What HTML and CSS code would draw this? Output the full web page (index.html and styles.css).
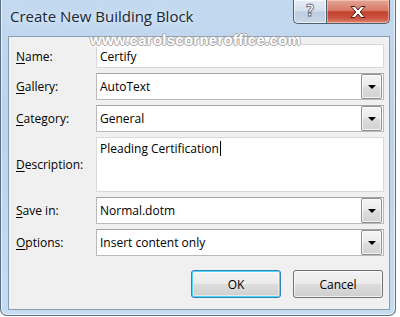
FILE: index.html
```html
<!DOCTYPE html>
<html>
<head>
<meta charset="utf-8">
<link rel="stylesheet" href="styles.css">
</head>
<body>
<div class="window">
  <div class="titlebar">
    <div class="title">Create New Building Block</div>
    <div class="caption-buttons">
      <div class="cap help"><span>?</span></div>
      <div class="cap close">
        <svg width="22" height="14" viewBox="0 0 22 14">
          <path d="M4 1.5 L8 1.5 L11 5 L14 1.5 L18 1.5 L13.2 7 L18 12.5 L14 12.5 L11 9 L8 12.5 L4 12.5 L8.8 7 Z" fill="#ffffff" stroke="#5a1d15" stroke-width="1" stroke-linejoin="round"/>
        </svg>
      </div>
    </div>
  </div>
  <div class="client">
    <div class="form">
      <label class="lbl"><u>N</u>ame:</label>
      <div class="field text h24"><span>Certify</span></div>

      <label class="lbl"><u>G</u>allery:</label>
      <div class="field combo"><span>AutoText</span><div class="drop"><i></i></div></div>

      <label class="lbl"><u>C</u>ategory:</label>
      <div class="field combo"><span>General</span><div class="drop"><i></i></div></div>

      <label class="lbl"><u>D</u>escription:</label>
      <div class="field area"><span>Pleading Certification</span><b class="caret"></b></div>

      <label class="lbl"><u>S</u>ave in:</label>
      <div class="field combo"><span>Normal.dotm</span><div class="drop"><i></i></div></div>

      <label class="lbl"><u>O</u>ptions:</label>
      <div class="field combo"><span>Insert content only</span><div class="drop"><i></i></div></div>
    </div>
    <div class="buttons">
      <div class="btn default">OK</div>
      <div class="btn">Cancel</div>
    </div>
  </div>
  <div class="watermark">www.carolscorneroffice.com</div>
</div>
</body>
</html>
```

FILE: styles.css
```css
html, body {
  margin: 0;
  padding: 0;
  background: #ffffff;
  width: 400px;
  height: 317px;
  overflow: hidden;
}

.window {
  position: relative;
  box-sizing: border-box;
  width: 396px;
  height: 316px;
  border: 1px solid #5d6f84;
  border-top: none;
  border-radius: 0 0 7px 7px;
  background: linear-gradient(to bottom, #c3d9f0 0%, #bcd3ec 40%, #c6dcf2 100%);
  box-shadow: inset 1px 0 0 rgba(255,255,255,0.6), inset -1px 0 0 rgba(255,255,255,0.6), inset 0 -1px 0 rgba(255,255,255,0.6);
  font-family: "Open Sans", "Liberation Sans", sans-serif;
  display: flex;
  flex-direction: column;
}

.titlebar {
  height: 36px;
  display: flex;
  justify-content: space-between;
  align-items: flex-start;
  padding: 0 5px 0 9px;
}

.title {
  font-size: 15px;
  color: #1a2738;
  padding-top: 6px;
  text-shadow: 0 0 6px rgba(255,255,255,0.9);
}

.caption-buttons {
  display: flex;
}

.cap {
  box-sizing: border-box;
  height: 24px;
  border: 1px solid #4f5f73;
  border-top: none;
  display: flex;
  align-items: center;
  justify-content: center;
}

.help {
  width: 33px;
  border-right: none;
  border-radius: 0 0 0 5px;
  background: linear-gradient(to bottom, #e6eef7 0%, #d3dfec 48%, #bccde0 52%, #c9d8e8 100%);
  box-shadow: inset 0 0 0 1px rgba(255,255,255,0.6);
}

.help span {
  font-family: "DejaVu Sans", sans-serif;
  font-weight: bold;
  font-size: 15px;
  color: #ffffff;
  -webkit-text-stroke: 0.8px #55657a;
  line-height: 1;
  margin-top: -1px;
}

.close {
  width: 64px;
  border-radius: 0 0 5px 0;
  background: linear-gradient(to bottom, #e4a596 0%, #d67a66 45%, #c3412d 52%, #cc5441 80%, #dd8a72 100%);
  box-shadow: inset 0 0 0 1px rgba(255,220,210,0.5);
}

.client {
  box-sizing: border-box;
  margin: 0 5px 5px 7px;
  flex: 1;
  background: #f0f0f0;
  border: 1px solid #8a9cb0;
  padding: 7px 5px 11px 7px;
  display: flex;
  flex-direction: column;
}

.form {
  display: grid;
  grid-template-columns: 80px 288px;
  row-gap: 5px;
  align-items: center;
}

.lbl {
  font-size: 12px;
  color: #000000;
}

.lbl u {
  text-decoration-thickness: 1px;
  text-underline-offset: 2px;
}

.field {
  box-sizing: border-box;
  background: #ffffff;
  font-size: 12px;
  color: #000000;
  position: relative;
  display: flex;
  align-items: center;
  padding-left: 3px;
}

.text {
  height: 24px;
  border: 1px solid #abadb3;
  border-color: #abadb3 #dbdfe6 #e3e9ef #e2e3ea;
  box-shadow: inset 0 0 0 1px #ffffff;
  outline: 1px solid #d9d9d9;
  outline-offset: -1px;
}

.combo {
  height: 27px;
  border: 1px solid #b9b9b9;
  border-top-color: #a4a4a4;
  justify-content: space-between;
  padding-right: 1px;
}

.drop {
  box-sizing: border-box;
  width: 21px;
  height: 25px;
  border: 1px solid #8e8f8f;
  border-radius: 2px;
  background: linear-gradient(to bottom, #f4f4f4 0%, #ebebeb 48%, #dddddd 52%, #d2d2d2 100%);
  box-shadow: inset 0 0 0 1px rgba(255,255,255,0.7);
  display: flex;
  align-items: center;
  justify-content: center;
}

.drop i {
  width: 0;
  height: 0;
  border-left: 4px solid transparent;
  border-right: 4px solid transparent;
  border-top: 4px solid #000000;
  margin-top: 1px;
}

.area {
  height: 55px;
  border: 1px solid #abadb3;
  border-color: #abadb3 #dbdfe6 #e3e9ef #e2e3ea;
  align-items: flex-start;
  padding-top: 2px;
  outline: 1px solid #d9d9d9;
  outline-offset: -1px;
}

.caret {
  display: block;
  width: 1px;
  height: 15px;
  background: #000000;
  margin-top: 1px;
  margin-left: 1px;
}

.buttons {
  display: flex;
  justify-content: flex-end;
  gap: 12px;
  margin-top: 14px;
  padding-right: 1px;
}

.btn {
  box-sizing: border-box;
  width: 90px;
  height: 28px;
  border: 1px solid #707070;
  border-radius: 3px;
  background: linear-gradient(to bottom, #f2f2f2 0%, #ebebeb 48%, #dddddd 52%, #cfcfcf 100%);
  box-shadow: inset 0 0 0 1px rgba(255,255,255,0.75);
  font-size: 12px;
  color: #000000;
  display: flex;
  align-items: center;
  justify-content: center;
}

.btn.default {
  border-color: #3c7fb1;
  box-shadow: inset 0 0 0 1px #48d8fb, inset 0 0 0 2px rgba(255,255,255,0.5);
  background: linear-gradient(to bottom, #f2f2f2 0%, #ebebeb 48%, #dddddd 52%, #cfcfcf 100%);
}

.watermark {
  position: absolute;
  left: 88px;
  top: 31px;
  padding: 0 1px;
  font-family: "Liberation Sans", sans-serif;
  font-weight: bold;
  font-size: 15px;
  letter-spacing: 0.25px;
  line-height: 18px;
  color: #ffffff;
  background: linear-gradient(to bottom, rgba(255,255,255,0) 0%, rgba(255,255,255,0) 35%, rgba(255,255,255,0.75) 36%, rgba(255,255,255,0.75) 90%, rgba(255,255,255,0) 91%);
  text-shadow: 1px 0 0 #a8a8a8, -1px 0 0 #a8a8a8, 0 1px 0 #a8a8a8, 0 -1px 0 #a8a8a8;
}
```
